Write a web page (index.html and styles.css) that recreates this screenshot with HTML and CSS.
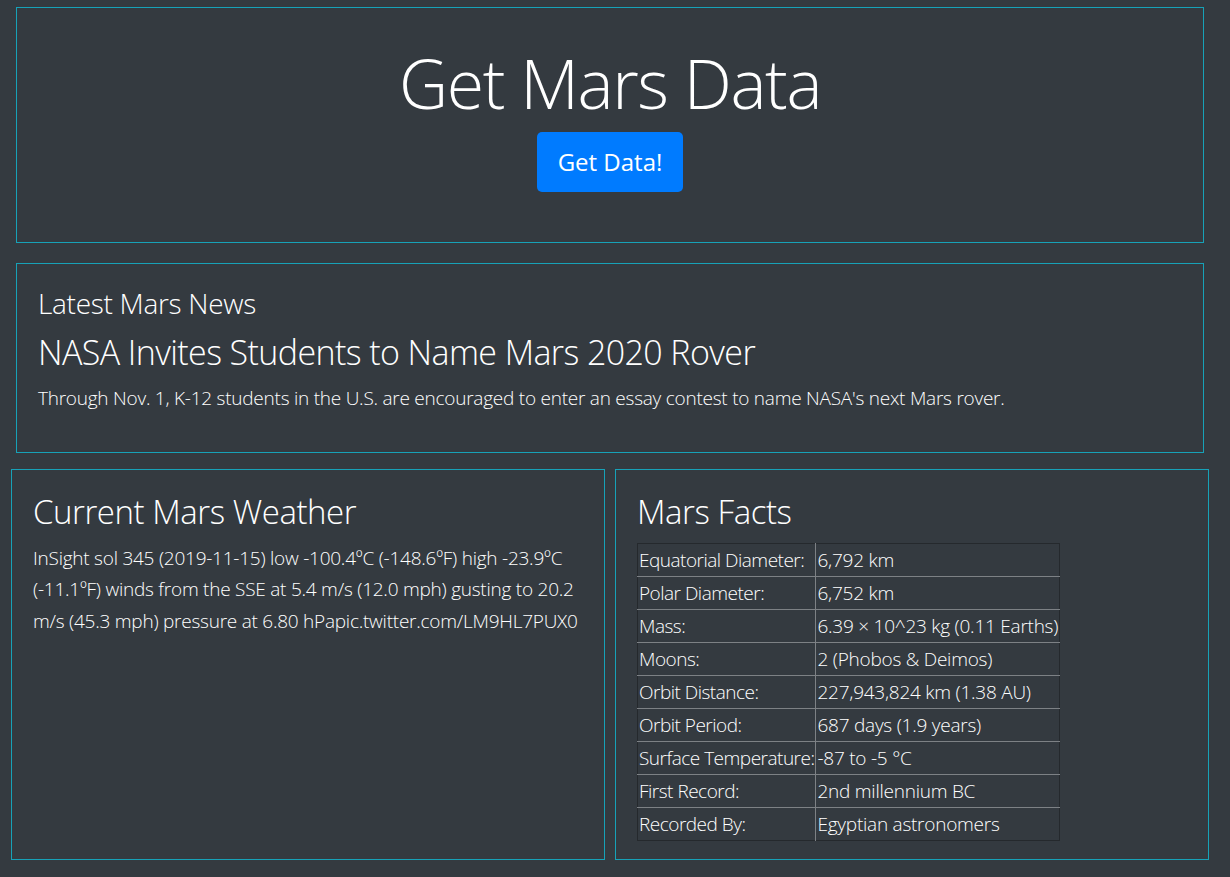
FILE: index.html
```html
<!DOCTYPE html>
<html lang="en">
<head>
<meta charset="utf-8">
<title>Mission to Mars</title>
<link rel="stylesheet" href="styles.css">
</head>
<body>
<div class="page">
  <header class="jumbo">
    <h1 class="jumbo-title">Get Mars Data</h1>
    <a class="btn-primary" href="#">Get Data!</a>
  </header>

  <section class="card news">
    <h3 class="news-heading">Latest Mars News</h3>
    <h2 class="news-title">NASA Invites Students to Name Mars 2020 Rover</h2>
    <p class="news-text">Through Nov. 1, K-12 students in the U.S. are encouraged to enter an essay contest to name NASA's next Mars rover.</p>
  </section>

  <div class="cols">
    <section class="card col">
      <h3 class="col-heading">Current Mars Weather</h3>
      <p class="weather-text">InSight sol 345 (2019-11-15) low -100.4ºC (-148.6ºF) high -23.9ºC (-11.1ºF) winds from the SSE at 5.4 m/s (12.0 mph) gusting to 20.2 m/s (45.3 mph) pressure at 6.80 hPapic.twitter.com/LM9HL7PUX0</p>
    </section>
    <section class="card col">
      <h3 class="col-heading">Mars Facts</h3>
      <table class="facts">
        <tbody>
          <tr><td>Equatorial Diameter:</td><td>6,792 km</td></tr>
          <tr><td>Polar Diameter:</td><td>6,752 km</td></tr>
          <tr><td>Mass:</td><td>6.39 × 10^23 kg (0.11 Earths)</td></tr>
          <tr><td>Moons:</td><td>2 (Phobos &amp; Deimos)</td></tr>
          <tr><td>Orbit Distance:</td><td>227,943,824 km (1.38 AU)</td></tr>
          <tr><td>Orbit Period:</td><td>687 days (1.9 years)</td></tr>
          <tr><td>Surface Temperature:</td><td>-87 to -5 °C</td></tr>
          <tr><td>First Record:</td><td>2nd millennium BC</td></tr>
          <tr><td>Recorded By:</td><td>Egyptian astronomers</td></tr>
        </tbody>
      </table>
    </section>
  </div>
</div>
</body>
</html>
```
FILE: styles.css
```css
* { box-sizing: border-box; }

html, body {
  margin: 0;
  background: #343a40;
}

body {
  color: #fff;
  font-family: "Open Sans", "Liberation Sans", sans-serif;
  font-weight: 300;
  font-size: 19px;
  letter-spacing: -0.24px;
}

.page {
  padding-top: 7px;
}

h1, h2, h3, p { margin: 0; font-weight: 300; }

.jumbo {
  margin: 0 26px 0 16px;
  height: 236px;
  border: 1px solid #17a2b8;
  padding-top: 34px;
  display: flex;
  flex-direction: column;
  align-items: center;
}

.jumbo-title {
  font-size: 68px;
  line-height: 81.6px;
  letter-spacing: -1.4px;
}

.btn-primary {
  margin-top: 8px;
  display: block;
  background: #007bff;
  color: #fff;
  text-decoration: none;
  font-weight: 400;
  font-size: 24px;
  line-height: 36px;
  letter-spacing: 0;
  padding: 12px 21px;
  border-radius: 5px;
}

.card {
  border: 1px solid #17a2b8;
  padding: 22px 21px 0;
}

.news {
  margin: 20px 26px 0 16px;
  height: 190px;
}

.news-heading {
  font-size: 28px;
  line-height: 34px;
  letter-spacing: -0.3px;
  margin-bottom: 12px;
}

.news-title {
  font-size: 34px;
  line-height: 41px;
  letter-spacing: -0.6px;
  margin-bottom: 10px;
}

.news-text,
.weather-text {
  line-height: 31.5px;
}

.cols {
  margin: 16px 21px 0 11px;
  display: flex;
  gap: 10px;
}

.col {
  flex: 1 1 0;
  height: 391px;
}

.col-heading {
  font-size: 33px;
  line-height: 39.6px;
  letter-spacing: -0.45px;
  margin-bottom: 11px;
}

.facts {
  border-collapse: collapse;
  border: 1px solid #25292d;
}

.facts td {
  padding: 0 1px;
  line-height: 32px;
  white-space: nowrap;
  border-top: 1px solid #7d8185;
}

.facts tr:first-child td {
  border-top: none;
}

.facts td:first-child {
  border-right: 1px solid #7d8185;
  letter-spacing: -0.5px;
}
```
